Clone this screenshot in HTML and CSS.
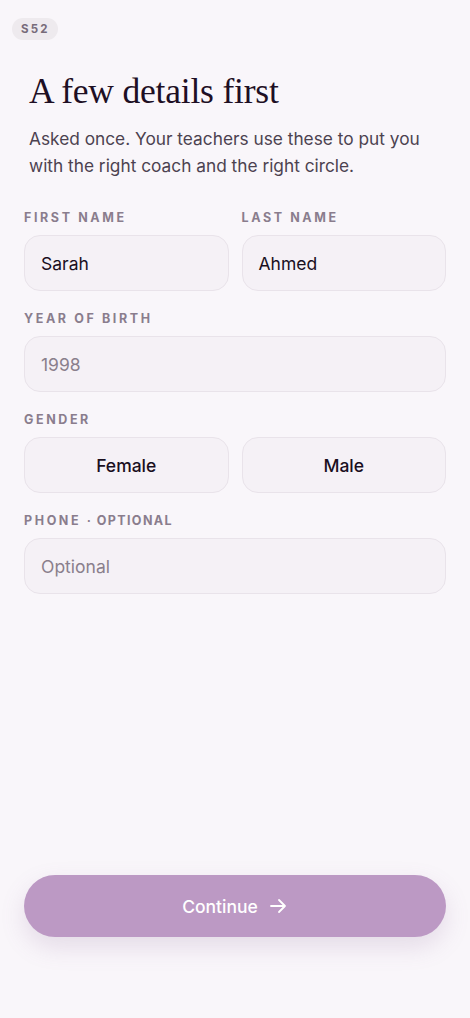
FILE: index.html
```html
<!DOCTYPE html>
<html lang="en">
<head>
<meta charset="utf-8">
<title>A few details first</title>
<link rel="stylesheet" href="styles.css">
</head>
<body>
<div class="screen">
  <div class="top">
    <span class="badge">S52</span>
  </div>
  <header class="intro">
    <h1 class="title">A few details first</h1>
    <p class="lead">Asked once. Your teachers use these to put you with the right coach and the right circle.</p>
  </header>
  <form class="form">
    <div class="row">
      <div class="field">
        <div class="label">First name</div>
        <div class="input"><span class="value">Sarah</span></div>
      </div>
      <div class="field">
        <div class="label">Last name</div>
        <div class="input"><span class="value">Ahmed</span></div>
      </div>
    </div>
    <div class="field">
      <div class="label">Year of birth</div>
      <div class="input"><span class="placeholder">1998</span></div>
    </div>
    <div class="field">
      <div class="label">Gender</div>
      <div class="row">
        <div class="input choice">Female</div>
        <div class="input choice">Male</div>
      </div>
    </div>
    <div class="field">
      <div class="label">Phone <span class="label-note">· optional</span></div>
      <div class="input"><span class="placeholder">Optional</span></div>
    </div>
  </form>
  <div class="spacer"></div>
  <div class="footer">
    <button class="cta" type="button">Continue
      <svg class="arrow" width="20" height="20" viewBox="0 0 20 20" fill="none" stroke="currentColor" stroke-width="1.8" stroke-linecap="round" stroke-linejoin="round"><path d="M3 10h14M11 4l6 6-6 6"/></svg>
    </button>
  </div>
</div>
</body>
</html>
```

FILE: styles.css
```css
* { box-sizing: border-box; }
html, body { margin: 0; padding: 0; }
body {
  background: #f9f6fa;
  font-family: Inter, "Noto Sans", sans-serif;
  color: #1c1020;
}
.screen {
  width: 470px;
  height: 1018px;
  display: flex;
  flex-direction: column;
  padding: 0 24px;
}
.top {
  padding-top: 17px;
  margin-left: -12px;
}
.badge {
  display: inline-block;
  height: 22px;
  line-height: 22px;
  padding: 0 8px 0 9px;
  border-radius: 11px;
  background: #eeeaee;
  color: #776b7a;
  font-size: 11.5px;
  font-weight: 700;
  letter-spacing: 2.2px;
}
.intro {
  padding: 0 5px;
}
.title {
  margin: 31px 0 0;
  font-family: "Liberation Serif", "DejaVu Serif", serif;
  font-weight: 400;
  font-size: 35.5px;
  line-height: 40px;
  color: #1e0f24;
  letter-spacing: -0.2px;
}
.lead {
  margin: 14px 0 0;
  font-size: 17.3px;
  line-height: 27px;
  color: #4c4250;
}
.form {
  margin-top: 31px;
  display: flex;
  flex-direction: column;
  gap: 20px;
}
.row {
  display: grid;
  grid-template-columns: 1fr 1fr;
  gap: 13px;
}
.field {
  display: flex;
  flex-direction: column;
}
.label {
  font-size: 12.5px;
  font-weight: 700;
  letter-spacing: 2.6px;
  text-transform: uppercase;
  color: #8a7d8d;
  line-height: 16px;
  margin-bottom: 9px;
}
.label-note {
  font-size: 12.5px;
  letter-spacing: 1.4px;
}
.input {
  height: 56px;
  border-radius: 16px;
  border: 1px solid #e9e3ea;
  background: #f5f1f6;
  display: flex;
  align-items: center;
  padding: 0 16px;
  font-size: 17.5px;
}
.value { color: #1a0f1e; }
.placeholder { color: #8a7f8c; }
.choice {
  justify-content: center;
  font-weight: 500;
  color: #1a0f1e;
}
.spacer { flex: 1; }
.footer {
  padding-bottom: 81px;
}
.cta {
  width: 100%;
  height: 62px;
  border: none;
  border-radius: 31px;
  background: #bc99c4;
  color: #ffffff;
  font-family: Inter, "Noto Sans", sans-serif;
  font-size: 17.5px;
  font-weight: 500;
  display: flex;
  align-items: center;
  justify-content: center;
  gap: 10px;
  box-shadow: 0 10px 24px rgba(140, 100, 150, 0.18);
  padding: 0;
}
.arrow { display: block; }
```
